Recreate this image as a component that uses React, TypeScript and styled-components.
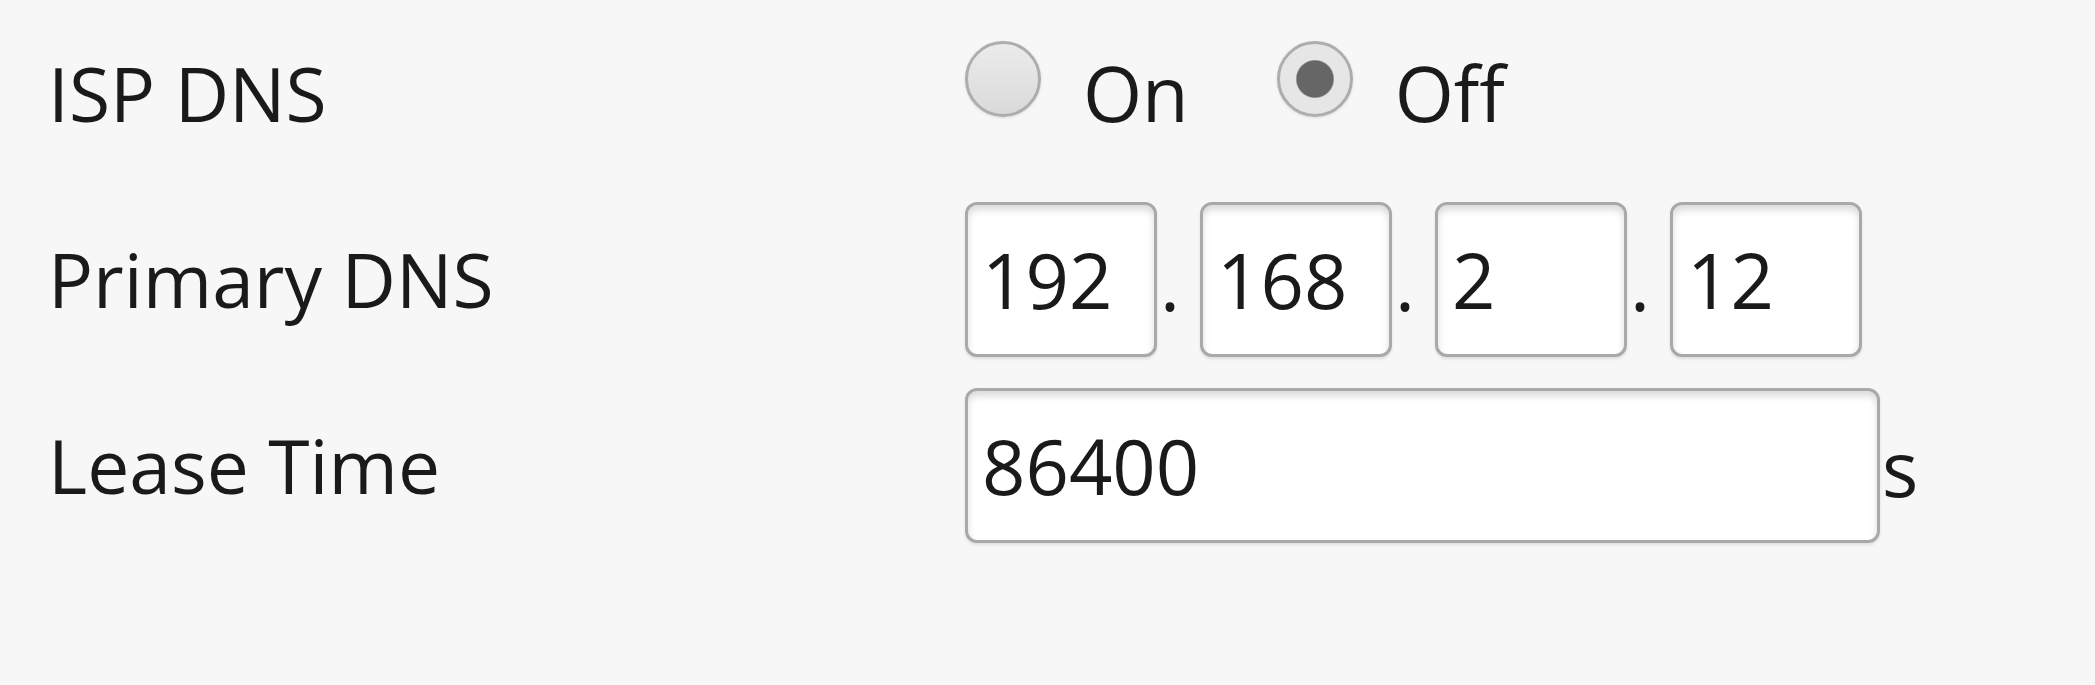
import React from "react";
import styled, { createGlobalStyle } from "styled-components";

const FONT = `"Open Sans", "Noto Sans", "Liberation Sans", sans-serif`;

const Global = createGlobalStyle`
  html, body {
    margin: 0;
    padding: 0;
    background: #f7f7f7;
  }
  body {
    font-family: ${FONT};
    color: #1a1a1a;
  }
`;

const Form = styled.div`
  display: flex;
  flex-direction: column;
  padding-left: 48px;
  width: 2095px;
  height: 685px;
  box-sizing: border-box;
  background: #f7f7f7;
`;

const Row = styled.div`
  display: grid;
  grid-template-columns: 917px 1fr;
  align-items: center;
  height: 186px;
`;

const Label = styled.div`
  font-size: 75px;
  line-height: 106px;
  color: #1a1a1a;
`;

const Controls = styled.div`
  display: flex;
  align-items: center;
  font-size: 76px;
  line-height: 106px;
`;

const RadioGroup = styled.div`
  display: flex;
  align-items: center;
  gap: 88px;
`;

const Option = styled.label`
  display: inline-flex;
  align-items: center;
  gap: 42px;
  font-size: 76px;
  line-height: 106px;
  color: #1a1a1a;
`;

const Radio = styled.input`
  appearance: none;
  -webkit-appearance: none;
  margin: 0 0 28px 0;
  width: 76px;
  height: 76px;
  border-radius: 50%;
  border: 3px solid #adadad;
  box-sizing: border-box;
  background: linear-gradient(#ebebeb, #dadada);
  box-shadow: 0 1px 3px rgba(0, 0, 0, 0.12);
  &:checked {
    background: radial-gradient(circle, #666 0 18px, #e6e6e6 19.5px);
  }
`;

const OctetBox = styled.input`
  width: 192px;
  height: 155px;
  box-sizing: border-box;
  border: 3px solid #a9a9a9;
  border-radius: 12px;
  background: #fff;
  box-shadow: inset 0 5px 7px rgba(0, 0, 0, 0.14), 0 2px 3px rgba(0, 0, 0, 0.1);
  font-family: ${FONT};
  font-size: 76px;
  color: #1a1a1a;
  padding: 0 0 0 14px;
  margin: 0;
  outline: none;
`;

const WideBox = styled(OctetBox)`
  width: 915px;
`;

const Dot = styled.span`
  width: 43px;
  padding-left: 3px;
  padding-top: 6px;
  box-sizing: border-box;
  font-size: 76px;
  line-height: 106px;
  color: #1a1a1a;
`;

const Unit = styled.span`
  padding-left: 2px;
  padding-top: 6px;
  font-size: 76px;
  line-height: 106px;
  color: #1a1a1a;
`;

export default function App() {
  const octets = ["192", "168", "2", "12"];
  return (
    <>
      <Global />
      <Form>
        <Row>
          <Label>ISP DNS</Label>
          <Controls>
            <RadioGroup>
              <Option>
                <Radio type="radio" name="ispdns" />
                On
              </Option>
              <Option>
                <Radio type="radio" name="ispdns" defaultChecked />
                Off
              </Option>
            </RadioGroup>
          </Controls>
        </Row>
        <Row>
          <Label>Primary DNS</Label>
          <Controls>
            {octets.map((o, i) => (
              <React.Fragment key={i}>
                <OctetBox type="text" defaultValue={o} />
                {i < octets.length - 1 && <Dot>.</Dot>}
              </React.Fragment>
            ))}
          </Controls>
        </Row>
        <Row>
          <Label>Lease Time</Label>
          <Controls>
            <WideBox type="text" defaultValue="86400" />
            <Unit>s</Unit>
          </Controls>
        </Row>
      </Form>
    </>
  );
}
